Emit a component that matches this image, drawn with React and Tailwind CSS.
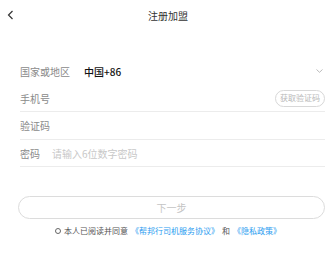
import React from 'react';

const Row = ({ label, children, line = true }) => (
  <div className={`flex items-center h-[28px] ${line ? 'border-b border-[#ececec]' : ''}`}>
    <span className="w-[32px] shrink-0 text-[10px] text-[#8a8a8a]">{label}</span>
    {children}
  </div>
);

export default function App() {
  return (
    <div className="w-[336px] h-[264px] bg-white font-['Noto_Sans_CJK_SC',sans-serif] overflow-hidden">
      {/* Header */}
      <div className="relative flex items-center justify-center h-[31px]">
        <svg className="absolute left-[7px] top-[10px]" width="7" height="10" viewBox="0 0 7 10" fill="none">
          <path d="M5.5 1 L1.5 5 L5.5 9" stroke="#333" strokeWidth="1.2" />
        </svg>
        <span className="text-[10px] text-[#333]">注册加盟</span>
      </div>

      {/* Form */}
      <div className="mt-[26px] ml-[20px] mr-[11px]">
        <div className="flex items-center h-[28px]">
          <span className="w-[64px] shrink-0 text-[10px] text-[#8a8a8a]">国家或地区</span>
          <span className="text-[10px] font-medium text-[#111]">中国+86</span>
          <svg className="ml-auto mr-[2px]" width="7" height="4" viewBox="0 0 7 4" fill="none">
            <path d="M0.5 0.5 L3.5 3.3 L6.5 0.5" stroke="#aaa" strokeWidth="0.8" />
          </svg>
        </div>
        <div className="flex items-center h-[27px] border-b border-[#ececec]">
          <span className="text-[10px] text-[#8a8a8a]">手机号</span>
          <span className="ml-auto flex items-center justify-center h-[17px] px-[4px] rounded-full border border-[#d8d8d8] text-[8px] text-[#b8b8b8]">
            获取验证码
          </span>
        </div>
        <Row label="验证码" />
        <div className="flex items-center h-[27px] border-b border-[#ececec]">
          <span className="w-[32px] shrink-0 text-[10px] text-[#8a8a8a]">密码</span>
          <span className="text-[10px] text-[#c8c8c8]">请输入6位数字密码</span>
        </div>
      </div>

      {/* Next */}
      <div className="mt-[29px] mx-[18px] mr-[11px] h-[23px] rounded-full border border-[#dcdcdc] flex items-center justify-center text-[10px] text-[#c4c4c4]">
        下一步
      </div>

      {/* Agreement */}
      <div className="mt-[6px] flex items-center justify-center text-[8px] text-[#555]">
        <span className="w-[6px] h-[6px] rounded-full border border-[#666] mr-[3px]" />
        <span>本人已阅读并同意</span>
        <span className="ml-[3px] text-[#2b9cf0]">《帮邦行司机服务协议》</span>
        <span className="mx-[3px]">和</span>
        <span className="text-[#2b9cf0]">《隐私政策》</span>
      </div>
    </div>
  );
}
